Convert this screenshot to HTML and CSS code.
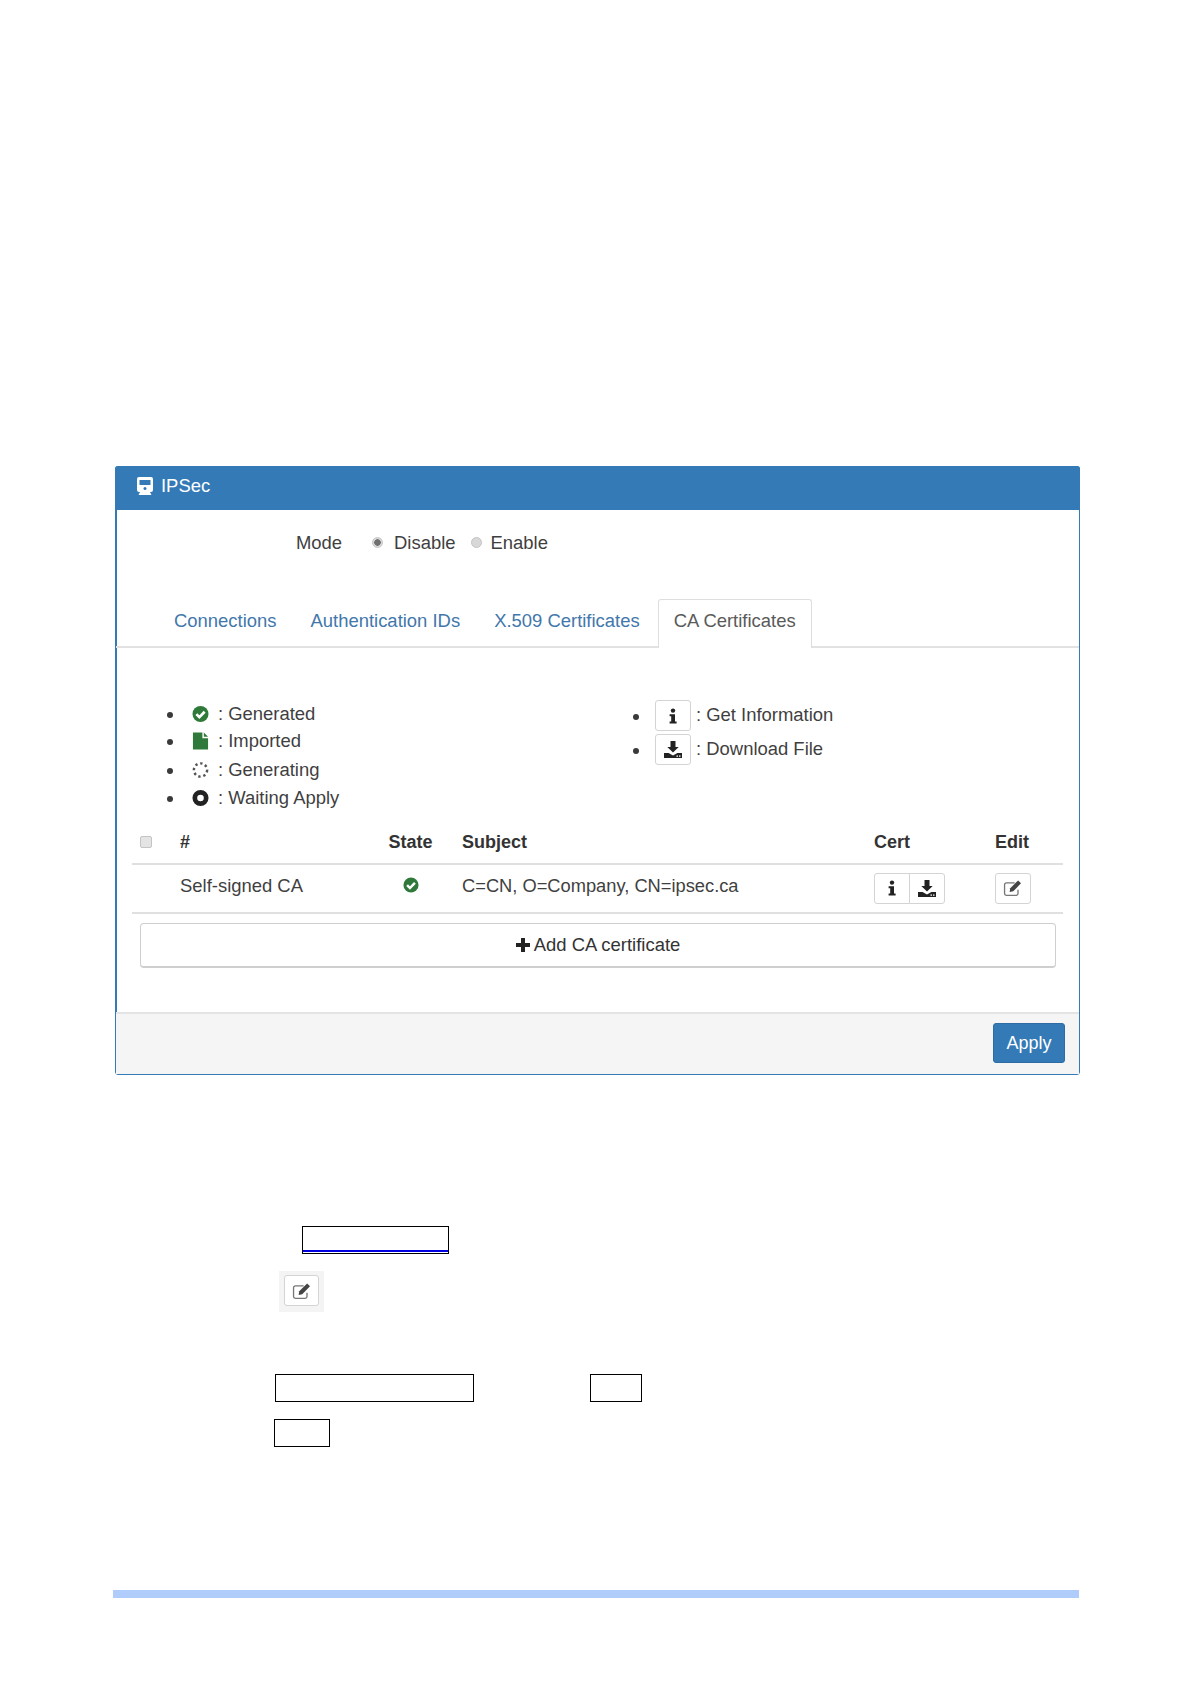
FILE: index.html
```html
<!DOCTYPE html>
<html lang="en">
<head>
<meta charset="utf-8">
<title>IPSec CA Certificates</title>
<link rel="stylesheet" href="styles.css">
</head>
<body>
<svg class="sprites" width="0" height="0" aria-hidden="true">
  <symbol id="i-check" viewBox="0 0 18 18"><circle cx="9" cy="9" r="8.5" fill="currentColor"/><path d="M4.600 9.200l3.200 3.200 5.600-5.800" fill="none" stroke="#fff" stroke-width="2.800"/></symbol>
  <symbol id="i-info" viewBox="0 0 14 16"><circle cx="7" cy="2.600" r="2.200"/><path d="M3.600 6.200h5.400v7.200h1.600V15.500H3.600v-2.100h1.600V8.300H3.600z"/></symbol>
  <symbol id="i-down" viewBox="0 0 18 17"><path d="M6.500 0h5v6h3.200L9 11.600 3.300 6h3.200z"/><path d="M0 12h4.600L9 14.600 13.400 12H18v5H0z"/><path d="M12.500 14.500h1.500v1.200h-1.500zM15 14.500h1.500v1.200H15z" fill="#fff"/></symbol>
  <symbol id="i-edit" viewBox="0 0 18 16"><path d="M13.500 9.500v3.500a1.600 1.600 0 0 1-1.600 1.600H3A1.600 1.600 0 0 1 1.400 13V5A1.600 1.600 0 0 1 3 3.400h7.500" fill="none" stroke="#777" stroke-width="1.200"/><path d="M6.500 8.200L13.600 1.200l2.600 2.600-7 7.100-3.200.6z" fill="#444"/></symbol>
</svg>

<main class="page">
  <section class="panel">
    <header class="panel-head">
      <svg class="train" viewBox="0 0 18 18" aria-hidden="true"><path fill="#fff" d="M3 0h12a2 2 0 0 1 2 2v11a2 2 0 0 1-2 2h-1l1.500 3h-13L4 15H3a2 2 0 0 1-2-2V2a2 2 0 0 1 2-2z"/><rect x="3.500" y="3" width="11" height="5" fill="#337ab7"/><circle cx="9" cy="11.500" r="1.500" fill="#337ab7"/></svg>
      <span>IPSec</span>
    </header>

    <div class="mode">
      <span class="mode-label">Mode</span>
      <span class="radio radio-on"></span><span class="mode-text">Disable</span>
      <span class="radio"></span><span class="mode-text">Enable</span>
    </div>

    <nav class="tabs">
      <a class="tab">Connections</a>
      <a class="tab">Authentication IDs</a>
      <a class="tab">X.509 Certificates</a>
      <a class="tab tab-active">CA Certificates</a>
    </nav>

    <div class="legends">
      <ul class="legend legend-state">
        <li><svg class="ico ico-green"><use href="#i-check"/></svg><span>: Generated</span></li>
        <li><svg class="ico ico-green" viewBox="0 0 18 18"><path fill="currentColor" d="M1 0h10v6h6v12H1z"/><path fill="currentColor" d="M12.500 0l4.500 4.500h-4.500z"/></svg><span>: Imported</span></li>
        <li><svg class="ico" viewBox="0 0 18 18"><circle cx="9" cy="9" r="7" fill="none" stroke="#555" stroke-width="2.600" stroke-dasharray="2.500 2.900"/></svg><span>: Generating</span></li>
        <li><svg class="ico" viewBox="0 0 18 18"><circle cx="9" cy="9" r="6" fill="none" stroke="#222" stroke-width="5"/></svg><span>: Waiting Apply</span></li>
      </ul>
      <ul class="legend legend-action">
        <li><span class="btn-ic"><svg class="g-info"><use href="#i-info"/></svg></span><span class="action-text">: Get Information</span></li>
        <li><span class="btn-ic"><svg class="g-down"><use href="#i-down"/></svg></span><span class="action-text">: Download File</span></li>
      </ul>
    </div>

    <table class="certs">
      <thead>
        <tr>
          <th class="c-check"><span class="checkbox"></span></th>
          <th class="c-name">#</th>
          <th class="c-state">State</th>
          <th class="c-subject">Subject</th>
          <th class="c-cert">Cert</th>
          <th class="c-edit">Edit</th>
        </tr>
      </thead>
      <tbody>
        <tr>
          <td></td>
          <td>Self-signed CA</td>
          <td class="c-state"><svg class="ico-sm ico-green"><use href="#i-check"/></svg></td>
          <td class="subject-text">C=CN, O=Company, CN=ipsec.ca</td>
          <td>
            <span class="btn-group">
              <span class="btn-ic"><svg class="g-info"><use href="#i-info"/></svg></span><span class="btn-ic"><svg class="g-down"><use href="#i-down"/></svg></span>
            </span>
          </td>
          <td><span class="btn-ic"><svg class="g-edit"><use href="#i-edit"/></svg></span></td>
        </tr>
      </tbody>
    </table>

    <div class="add-wrap">
      <button class="add" type="button"><svg class="plus" viewBox="0 0 14 14" aria-hidden="true"><path d="M5 0h4v5h5v4H9v5H5V9H0V5h5z"/></svg>Add CA certificate</button>
    </div>

    <footer class="panel-foot">
      <button class="apply" type="button">Apply</button>
    </footer>
  </section>

  <div class="doc">
    <div class="doc-row doc-row-1"><span class="box box-link"></span></div>
    <div class="doc-row doc-row-2"><span class="edit-shot"><span class="btn-ic"><svg class="g-edit"><use href="#i-edit"/></svg></span></span></div>
    <div class="doc-row doc-row-3"><span class="box box-wide"></span><span class="box box-small"></span></div>
    <div class="doc-row doc-row-4"><span class="box box-tiny"></span></div>
  </div>

  <div class="foot-bar"></div>
</main>
</body>
</html>
```

FILE: styles.css
```css
* { box-sizing: border-box; }
html, body { margin: 0; padding: 0; background: #fff; }
body {
  font-family: "Liberation Sans", Arial, sans-serif;
  font-size: 18.45px;
  color: #3f3f3f;
  height: 1684px;
  overflow: hidden;
}
.sprites { position: absolute; }
.page { padding: 466px 0 0 115px; width: 1191px; }

/* panel */
.panel {
  width: 965px;
  height: 609px;
  border: 1px solid #337ab7;
  border-radius: 3px;
  box-shadow: inset 1px 0 0 #337ab7;
  display: flex;
  flex-direction: column;
}
.panel-head {
  height: 44px;
  margin: -1px -1px 0;
  padding: 0 0 4px 21px;
  background: #337ab7;
  color: #fff;
  border-radius: 3px 3px 0 0;
  display: flex;
  align-items: center;
  gap: 7px;
}
.train { width: 18px; height: 18px; }

.mode {
  height: 88px;
  padding: 21px 0 0 180px;
  display: flex;
  align-items: flex-start;
  line-height: 24px;
}
.mode-label { width: 76px; }
.mode-text { margin-right: 15px; }
.radio {
  width: 11px;
  height: 11px;
  margin: 6px 11px 0 0;
  border-radius: 50%;
  background: #d8d8d8;
  border: 1px solid #c4c4c4;
}
.mode-text + .radio { margin-right: 9px; }
.radio-on { background: radial-gradient(circle, #707070 0 3px, #d8d8d8 3.5px); }

/* tabs */
.tabs {
  height: 49px;
  padding-left: 42px;
  margin-top: 1px;
  display: flex;
  gap: 2px;
  border-bottom: 2px solid #e2e2e2;
}
.tab {
  height: 49px;
  padding: 9px 15px 0;
  line-height: 24px;
  color: #4277ab;
  border: 1px solid transparent;
  border-bottom: 0;
  border-radius: 3px 3px 0 0;
}
.tab-active {
  color: #5a5a5a;
  background: #fff;
  border-color: #dedede;
}

/* legends */
.legends {
  height: 182px;
  padding-top: 52px;
  display: flex;
}
.legend { list-style: none; margin: 0; padding: 0; }
.legend li { display: flex; align-items: center; position: relative; }
.legend li::before {
  content: "";
  position: absolute;
  left: -22px;
  top: 50%;
  width: 6px;
  height: 6px;
  margin-top: -2px;
  border-radius: 50%;
  background: #3a3a3a;
}
.legend-state { margin-left: 76px; width: 463px; }
.legend-state li { height: 28px; gap: 9px; }
.legend-state li::before { left: -25px; }
.legend-state li:nth-child(2) { margin-top: -1px; }
.legend-state li:nth-child(3) { margin-top: 1px; }
.legend-action li { height: 33px; gap: 5px; margin-top: -1px; }
.legend-action li + li { margin-top: 1px; }
.action-text { padding-bottom: 2px; }
.ico { width: 17px; height: 18px; }
.ico-green { color: #2f7a3a; fill: #2f7a3a; }
.ico-sm { width: 16px; height: 16px; display: block; margin: 0 auto 2px; }

.btn-ic {
  width: 36px;
  height: 31px;
  background: #fff;
  border: 1px solid #d4d4d4;
  border-radius: 3px;
  display: inline-flex;
  align-items: center;
  justify-content: center;
  color: #222;
  fill: #222;
  vertical-align: top;
}
.g-info { width: 14px; height: 16px; }
.g-down { width: 18px; height: 17px; }
.g-edit { width: 20px; height: 18px; }
.btn-group { display: inline-flex; }
.btn-group .btn-ic:first-child { border-radius: 3px 0 0 3px; }
.btn-group .btn-ic + .btn-ic { margin-left: -1px; border-radius: 0 3px 3px 0; }

/* table */
.certs {
  width: 931px;
  margin-left: 16px;
  border-collapse: collapse;
  table-layout: fixed;
}
.certs th {
  height: 34px;
  padding: 0;
  text-align: left;
  font-size: 18px;
  font-weight: 700;
  color: #333;
  border-bottom: 2px solid #e0e0e0;
  vertical-align: top;
  line-height: 24px;
}
.certs td {
  height: 49px;
  padding: 0 0 6px;
  border-bottom: 2px solid #e0e0e0;
  vertical-align: middle;
}
.certs .subject-text { font-size: 18.3px; padding-bottom: 6px; }
.certs td .btn-group, .certs td > .btn-ic { margin-top: 5px; }
.c-check { width: 48px; }
.c-name { width: 194px; }
.certs .c-state { width: 88px; padding-right: 15px; text-align: center; }
.c-subject { width: 412px; }
.c-cert { width: 121px; }
.checkbox {
  display: block;
  width: 12px;
  height: 12px;
  margin: 6px 0 0 8px;
  background: #e4e4e4;
  border: 1px solid #c4c4c4;
  border-radius: 2px;
}

/* add button */
.add-wrap { padding: 9px 24px 0; }
.add {
  width: 916px;
  height: 45px;
  background: #fff;
  border: 1px solid #cfcfcf;
  border-bottom-width: 2px;
  border-radius: 4px;
  font: inherit;
  color: #333;
  display: flex;
  align-items: center;
  justify-content: center;
  gap: 4px;
}
.plus { width: 14px; height: 14px; fill: #222; }

/* footer */
.panel-foot {
  margin-top: auto;
  height: 62px;
  background: #f5f5f5;
  border-top: 2px solid #e4e4e4;
  padding: 9px 14px 0 0;
  display: flex;
  justify-content: flex-end;
  align-items: flex-start;
}
.apply {
  width: 72px;
  height: 40px;
  padding: 0;
  background: #337ab7;
  color: #fff;
  border: 1px solid #2e6da4;
  border-radius: 3px;
  font-family: inherit;
  font-size: 18px;
}

/* document fragments below the panel */
.doc { height: 0; }
.doc-row { display: flex; }
.box { display: block; border: 1px solid #000; height: 28px; }
.doc-row-1 { padding: 151px 0 0 187px; }
.box-link {
  width: 147px;
  background: linear-gradient(#0000e0, #0000e0) 0 calc(100% - 1px) / 100% 2px no-repeat;
}
.doc-row-2 { padding: 17px 0 0 164px; }
.edit-shot {
  width: 45px;
  height: 41px;
  background: #f4f4f4;
  padding: 4px 5px;
  display: flex;
}
.doc-row-3 { padding: 62px 0 0 160px; }
.box-wide { width: 199px; }
.box-small { width: 52px; margin-left: 116px; }
.doc-row-4 { padding: 17px 0 0 159px; }
.box-tiny { width: 56px; }

.foot-bar {
  position: absolute;
  left: 113px;
  top: 1590px;
  width: 966px;
  height: 8px;
  background: #b0ccfa;
}
```
